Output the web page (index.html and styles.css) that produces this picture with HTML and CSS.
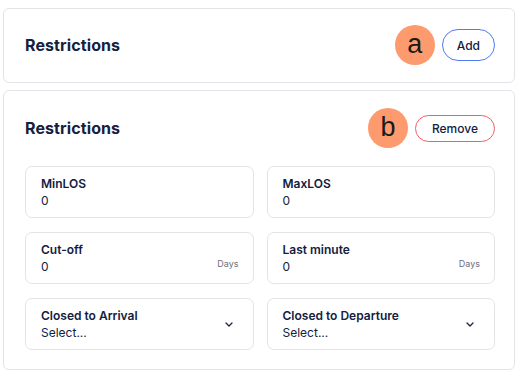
FILE: index.html
```html
<!DOCTYPE html>
<html lang="en">
<head>
  <meta charset="UTF-8" />
  <meta name="viewport" content="width=device-width, initial-scale=1.0"/>
  <title>Restrictions</title>
  <link rel="stylesheet" href="styles.css">
</head>
<body>
  <section class="card card-collapsed">
    <div class="card-head">
      <h2>Restrictions</h2>
      <div class="actions">
        <span class="marker">a</span>
        <button class="btn btn-add">Add</button>
      </div>
    </div>
  </section>

  <section class="card card-open">
    <div class="card-head">
      <h2>Restrictions</h2>
      <div class="actions">
        <span class="marker">b</span>
        <button class="btn btn-remove">Remove</button>
      </div>
    </div>

    <div class="fields">
      <div class="field">
        <div class="field-text">
          <label>MinLOS</label>
          <span class="value">0</span>
        </div>
      </div>
      <div class="field">
        <div class="field-text">
          <label>MaxLOS</label>
          <span class="value">0</span>
        </div>
      </div>
      <div class="field">
        <div class="field-text">
          <label>Cut-off</label>
          <span class="value">0</span>
        </div>
        <span class="unit">Days</span>
      </div>
      <div class="field">
        <div class="field-text">
          <label>Last minute</label>
          <span class="value">0</span>
        </div>
        <span class="unit">Days</span>
      </div>
      <div class="field field-select">
        <div class="field-text">
          <label>Closed to Arrival</label>
          <span class="value">Select...</span>
        </div>
        <svg class="chevron" width="8" height="5" viewBox="0 0 8 5"><path d="M1 1 4 4 7 1" fill="none" stroke="#1b2440" stroke-width="1.3" stroke-linecap="round" stroke-linejoin="round"/></svg>
      </div>
      <div class="field field-select">
        <div class="field-text">
          <label>Closed to Departure</label>
          <span class="value">Select...</span>
        </div>
        <svg class="chevron" width="8" height="5" viewBox="0 0 8 5"><path d="M1 1 4 4 7 1" fill="none" stroke="#1b2440" stroke-width="1.3" stroke-linecap="round" stroke-linejoin="round"/></svg>
      </div>
    </div>
  </section>
</body>
</html>
```

FILE: styles.css
```css
:root {
  --text-dark: #13203f;
  --border: #e3e4e8;
  --marker: #fd9a6e;
  --blue: #4f7cf3;
  --red: #ef5d66;
}

body {
  font-family: Inter, "Open Sans", sans-serif;
  color: var(--text-dark);
  background-color: white;
  margin: 0;
  padding: 8px 3px 0 3px;
}

.card {
  border: 1px solid var(--border);
  border-radius: 6px;
  background: white;
  padding: 16px 19px 17px 21px;
}

.card-open {
  margin-top: 7px;
  padding: 17px 19px 19px 21px;
}

.card-head {
  display: flex;
  align-items: center;
  justify-content: space-between;
}

.card-head h2 {
  margin: 0;
  font-size: 16px;
  font-weight: 700;
  letter-spacing: 0.1px;
}

.actions {
  display: flex;
  align-items: center;
  gap: 7px;
}

.marker {
  width: 40px;
  height: 40px;
  border-radius: 50%;
  background-color: var(--marker);
  color: #1a1a1a;
  font-family: "Liberation Sans", Arial, sans-serif;
  font-size: 27px;
  line-height: 38px;
  text-align: center;
}

.btn {
  font-family: inherit;
  font-size: 12px;
  font-weight: 500;
  color: var(--text-dark);
  background: white;
  border-radius: 16px;
  cursor: pointer;
}

.btn-add {
  height: 32px;
  padding: 0 14px;
  border: 1px solid var(--blue);
}

.btn-remove {
  height: 27px;
  padding: 0 16px;
  border: 1px solid var(--red);
}

.fields {
  display: grid;
  grid-template-columns: 1fr 1fr;
  column-gap: 13px;
  row-gap: 14px;
  margin-top: 18px;
}

.field {
  height: 52px;
  box-sizing: border-box;
  border: 1px solid var(--border);
  border-radius: 7px;
  padding: 0 14px 0 15px;
  display: flex;
  align-items: center;
  justify-content: space-between;
}

.field-text {
  display: flex;
  flex-direction: column;
  gap: 2px;
}

.field-text label {
  font-size: 12px;
  font-weight: 600;
  line-height: 15px;
}

.field-text .value {
  font-size: 12px;
  line-height: 16px;
}

.unit {
  font-size: 9px;
  color: #6b7080;
  align-self: flex-end;
  margin-bottom: 14px;
}

.chevron {
  margin-right: 6px;
}
```
